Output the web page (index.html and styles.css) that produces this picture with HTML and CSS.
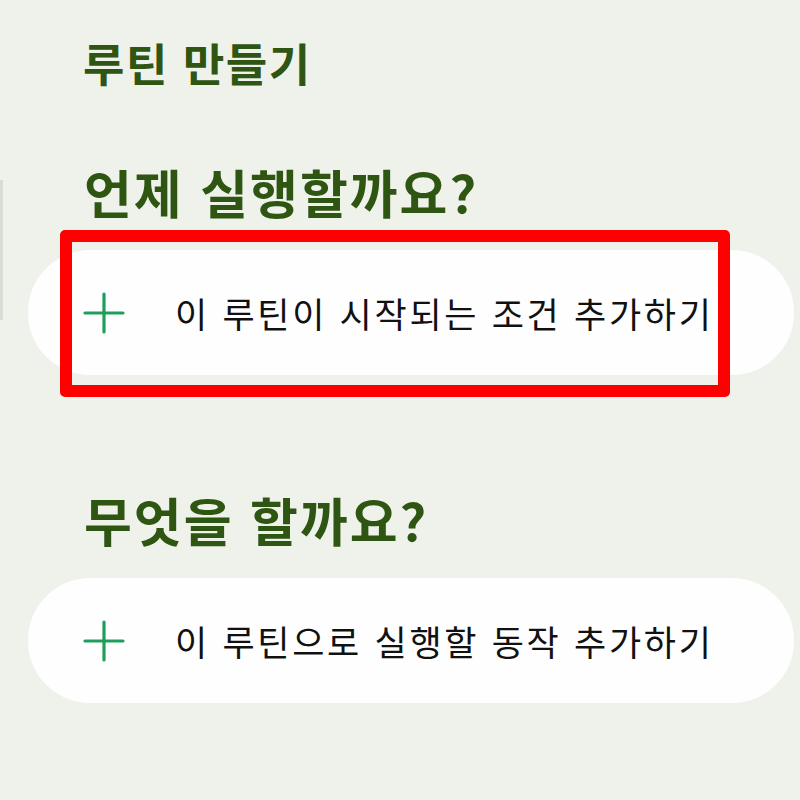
FILE: index.html
```html
<!DOCTYPE html>
<html lang="ko">
<head>
<meta charset="utf-8">
<title>루틴 만들기</title>
<link rel="stylesheet" href="styles.css">
</head>
<body>
<div class="edge"></div>
<main class="page">
  <h1 class="title">루틴 만들기</h1>
  <section class="section">
    <h2 class="heading">언제 실행할까요?</h2>
    <div class="card-wrap">
      <button class="card">
        <svg class="plus" viewBox="0 0 42 42" width="42" height="42"><path d="M21 2V40M2 21H40" stroke="#1f9d5a" stroke-width="3.2" stroke-linecap="round" fill="none"/></svg>
        <span class="label">이 루틴이 시작되는 조건 추가하기</span>
      </button>
      <div class="highlight"></div>
    </div>
  </section>
  <section class="section second">
    <h2 class="heading">무엇을 할까요?</h2>
    <div class="card-wrap">
      <button class="card">
        <svg class="plus" viewBox="0 0 42 42" width="42" height="42"><path d="M21 2V40M2 21H40" stroke="#1f9d5a" stroke-width="3.2" stroke-linecap="round" fill="none"/></svg>
        <span class="label">이 루틴으로 실행할 동작 추가하기</span>
      </button>
    </div>
  </section>
</main>
</body>
</html>
```

FILE: styles.css
```css
html, body {
  margin: 0;
  padding: 0;
}
body {
  background: #eff2eb;
  width: 800px;
  height: 800px;
  overflow: hidden;
  font-family: "Noto Sans CJK KR", "Noto Sans", sans-serif;
  position: relative;
}
.edge {
  position: absolute;
  left: 0;
  top: 180px;
  width: 3px;
  height: 140px;
  background: #d9dcd5;
}
.page {
  padding-top: 38px;
}
.title {
  margin: 0 0 0 83px;
  font-size: 45px;
  line-height: 50px;
  font-weight: 700;
  color: #2e5512;
  letter-spacing: 1.5px;
}
.section {
  margin-top: 76px;
}
.section.second {
  margin-top: 117px;
}
.heading {
  margin: 0 0 0 84px;
  font-size: 52px;
  line-height: 56px;
  font-weight: 700;
  color: #2e5512;
  letter-spacing: 2px;
}
.card-wrap {
  position: relative;
  margin-top: 30px;
  margin-left: 28px;
  width: 766px;
}
.card {
  display: flex;
  align-items: center;
  gap: 50px;
  width: 100%;
  height: 125px;
  box-sizing: border-box;
  padding: 0 0 0 55px;
  border: none;
  border-radius: 62px;
  background: #fefefe;
  font-family: inherit;
  text-align: left;
  cursor: pointer;
}
.plus {
  flex: none;
  display: block;
}
.label {
  font-size: 35px;
  line-height: 40px;
  color: #111;
  font-weight: 400;
  letter-spacing: 2.7px;
  white-space: nowrap;
}
.highlight {
  position: absolute;
  left: 32px;
  top: -20px;
  width: 670px;
  height: 167px;
  box-sizing: border-box;
  border: 12px solid #ff0000;
  border-radius: 5px;
  pointer-events: none;
}
```
